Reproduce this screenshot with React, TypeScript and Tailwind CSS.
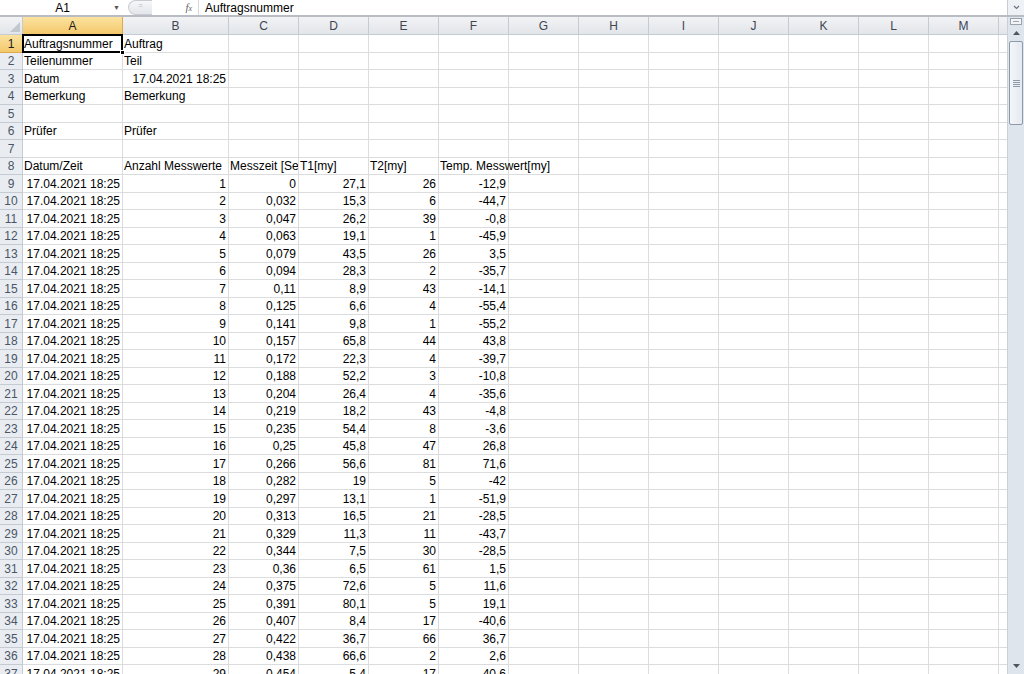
import React from "react";

type Cell = { t: string; r?: boolean; clip?: boolean };

const colW = [
  "w-[100px]",
  "w-[106px]",
  "w-[70px]",
  "w-[70px]",
  "w-[70px]",
  "w-[70px]",
  "w-[70px]",
  "w-[70px]",
  "w-[70px]",
  "w-[70px]",
  "w-[70px]",
  "w-[70px]",
  "w-[70px]",
];
const letters = ["A", "B", "C", "D", "E", "F", "G", "H", "I", "J", "K", "L", "M"];

const data: [string, string, string, string, string][] = [
  ["1", "0", "27,1", "26", "-12,9"],
  ["2", "0,032", "15,3", "6", "-44,7"],
  ["3", "0,047", "26,2", "39", "-0,8"],
  ["4", "0,063", "19,1", "1", "-45,9"],
  ["5", "0,079", "43,5", "26", "3,5"],
  ["6", "0,094", "28,3", "2", "-35,7"],
  ["7", "0,11", "8,9", "43", "-14,1"],
  ["8", "0,125", "6,6", "4", "-55,4"],
  ["9", "0,141", "9,8", "1", "-55,2"],
  ["10", "0,157", "65,8", "44", "43,8"],
  ["11", "0,172", "22,3", "4", "-39,7"],
  ["12", "0,188", "52,2", "3", "-10,8"],
  ["13", "0,204", "26,4", "4", "-35,6"],
  ["14", "0,219", "18,2", "43", "-4,8"],
  ["15", "0,235", "54,4", "8", "-3,6"],
  ["16", "0,25", "45,8", "47", "26,8"],
  ["17", "0,266", "56,6", "81", "71,6"],
  ["18", "0,282", "19", "5", "-42"],
  ["19", "0,297", "13,1", "1", "-51,9"],
  ["20", "0,313", "16,5", "21", "-28,5"],
  ["21", "0,329", "11,3", "11", "-43,7"],
  ["22", "0,344", "7,5", "30", "-28,5"],
  ["23", "0,36", "6,5", "61", "1,5"],
  ["24", "0,375", "72,6", "5", "11,6"],
  ["25", "0,391", "80,1", "5", "19,1"],
  ["26", "0,407", "8,4", "17", "-40,6"],
  ["27", "0,422", "36,7", "66", "36,7"],
  ["28", "0,438", "66,6", "2", "2,6"],
  ["29", "0,454", "5,4", "17", "-40,6"],
];

const rows: Cell[][] = [
  [{ t: "Auftragsnummer" }, { t: "Auftrag" }],
  [{ t: "Teilenummer" }, { t: "Teil" }],
  [{ t: "Datum" }, { t: "17.04.2021 18:25", r: true }],
  [{ t: "Bemerkung" }, { t: "Bemerkung" }],
  [],
  [{ t: "Prüfer" }, { t: "Prüfer" }],
  [],
  [
    { t: "Datum/Zeit" },
    { t: "Anzahl Messwerte" },
    { t: "Messzeit [Sek]", clip: true },
    { t: "T1[my]" },
    { t: "T2[my]" },
    { t: "Temp. Messwert[my]" },
  ],
  ...data.map((d) => [
    { t: "17.04.2021 18:25", r: true },
    ...d.map((v) => ({ t: v, r: true })),
  ]),
];

function Row({ idx, cells }: { idx: number; cells: Cell[] }) {
  const sel = idx === 0;
  return (
    <div className="flex h-[17.5px] shrink-0">
      <div
        className={
          sel
            ? "w-[23px] shrink-0 flex items-center justify-center pt-[1px] border-r border-b border-[#e0a94a] bg-gradient-to-b from-[#fbe3a0] to-[#f4c86a] text-[#202020]"
            : "w-[23px] shrink-0 flex items-center justify-center pt-[1px] border-r border-b border-[#c5cbd3] bg-[#e9edf2] text-[#4b5566]"
        }
      >
        {idx + 1}
      </div>
      {colW.map((w, c) => {
        const cell = cells[c];
        return (
          <div
            key={c}
            className={`${w} shrink-0 relative border-r border-b border-[#dadcdd] ${cell?.clip ? "overflow-hidden" : ""}`}
          >
            {cell && (
              <div
                className={`absolute inset-y-0 pt-[1px] flex items-center whitespace-nowrap z-10 ${
                  cell.r ? "right-[2px] justify-end" : "left-[1px]"
                }`}
              >
                {cell.t}
              </div>
            )}
            {sel && c === 0 && (
              <div className="absolute -left-[1px] -top-[1px] -right-[1px] -bottom-[1px] border-2 border-black z-20 pointer-events-none">
                <div className="absolute -right-[4px] -bottom-[4px] w-[5px] h-[5px] bg-black border border-white" />
              </div>
            )}
          </div>
        );
      })}
      <div className="flex-1 border-b border-[#dadcdd]" />
    </div>
  );
}

export default function App() {
  return (
    <div
      className="w-[1024px] h-[674px] overflow-hidden bg-white flex flex-col text-[12px] text-black"
      style={{ fontFamily: '"Liberation Sans", Arial, sans-serif' }}
    >
      {/* formula bar */}
      <div className="h-[15px] shrink-0 flex items-center bg-white">
        <div className="w-[125px] shrink-0 relative flex items-center justify-center h-full">
          <span className="text-[12px]">A1</span>
          <span className="absolute right-[5px] top-[3px] text-[7px] text-[#555]">▼</span>
        </div>
        <div className="w-[24px] h-[15px] shrink-0 ml-[3px] rounded-l-full border border-[#c8ccd2] border-r-0 bg-gradient-to-b from-[#f6f7f9] to-[#e3e6ea] flex items-center justify-center">
          <span className="text-[8px] text-[#bbb] -mt-[4px]">=</span>
        </div>
        <div className="w-[46px] shrink-0 flex items-center justify-end pr-[6px]">
          <span className="italic text-[#666] text-[11px]" style={{ fontFamily: '"Liberation Serif", serif' }}>
            f<span className="text-[8px]">x</span>
          </span>
        </div>
        <div className="flex-1 h-full border-l border-[#d6d9dd] pl-[6px] flex items-center">Auftragsnummer</div>
        <div className="w-[17px] shrink-0 h-full border-l border-[#c8ccd2] bg-[#eef1f5] flex items-center justify-center">
          <svg width="7" height="5" viewBox="0 0 7 5">
            <path d="M1 1 L3.5 3.5 L6 1" stroke="#6b7380" strokeWidth="1.2" fill="none" />
          </svg>
        </div>
      </div>
      <div className="h-[2px] shrink-0 border-t border-b border-[#b9bdc3] bg-[#f3f4f6]" />

      <div className="flex-1 flex min-h-0">
        {/* sheet */}
        <div className="flex-1 flex flex-col min-w-0 overflow-hidden">
          {/* column headers */}
          <div className="flex h-[18px] shrink-0 text-[#3f4652]">
            <div className="w-[23px] shrink-0 relative border-r border-b border-[#c5cbd3] bg-gradient-to-b from-[#f2f3f5] to-[#e2e5e9]">
              <div className="absolute right-[2px] bottom-[2px] w-0 h-0 border-l-[10px] border-l-transparent border-b-[10px] border-b-[#c3c8cf]" />
            </div>
            {colW.map((w, c) => (
              <div
                key={c}
                className={
                  c === 0
                    ? `${w} shrink-0 flex items-center justify-center border-r border-b border-[#e0a94a] bg-gradient-to-b from-[#fbe3a0] to-[#f4c86a] text-[#202020]`
                    : `${w} shrink-0 flex items-center justify-center border-r border-b border-[#c5cbd3] bg-gradient-to-b from-[#f2f3f5] to-[#e2e5e9]`
                }
              >
                {letters[c]}
              </div>
            ))}
            <div className="flex-1 border-b border-[#c5cbd3] bg-gradient-to-b from-[#f2f3f5] to-[#e2e5e9]" />
          </div>
          {rows.map((cells, i) => (
            <Row key={i} idx={i} cells={cells} />
          ))}
        </div>

        {/* vertical scrollbar */}
        <div className="w-[17px] shrink-0 flex flex-col bg-[#dfe5ed] border-l border-[#c9d0d9]">
          <div className="h-[7px] shrink-0 mx-[2px] mt-[1px] border border-[#9aa3ae] bg-[#f3f5f8] flex flex-col justify-center gap-[1px] px-[2px]">
            <div className="h-px bg-[#9aa3ae]" />
          </div>
          <div className="h-[16px] shrink-0 flex items-center justify-center">
            <svg width="7" height="4" viewBox="0 0 7 4">
              <path d="M0 4 L3.5 0 L7 4 Z" fill="#4d5561" />
            </svg>
          </div>
          <div className="flex-1 relative">
            <div className="mx-[1px] h-[84px] rounded-[2px] border border-[#8f9aa8] bg-gradient-to-r from-[#f4f6f9] to-[#e4e9f0] flex flex-col items-center justify-center gap-[1px]">
              <div className="w-[7px] h-px bg-[#8f9aa8]" />
              <div className="w-[7px] h-px bg-[#8f9aa8]" />
              <div className="w-[7px] h-px bg-[#8f9aa8]" />
              <div className="w-[7px] h-px bg-[#8f9aa8]" />
            </div>
          </div>
          <div className="h-[16px] shrink-0 flex items-center justify-center">
            <svg width="7" height="4" viewBox="0 0 7 4">
              <path d="M0 0 L3.5 4 L7 0 Z" fill="#4d5561" />
            </svg>
          </div>
        </div>
      </div>
    </div>
  );
}
